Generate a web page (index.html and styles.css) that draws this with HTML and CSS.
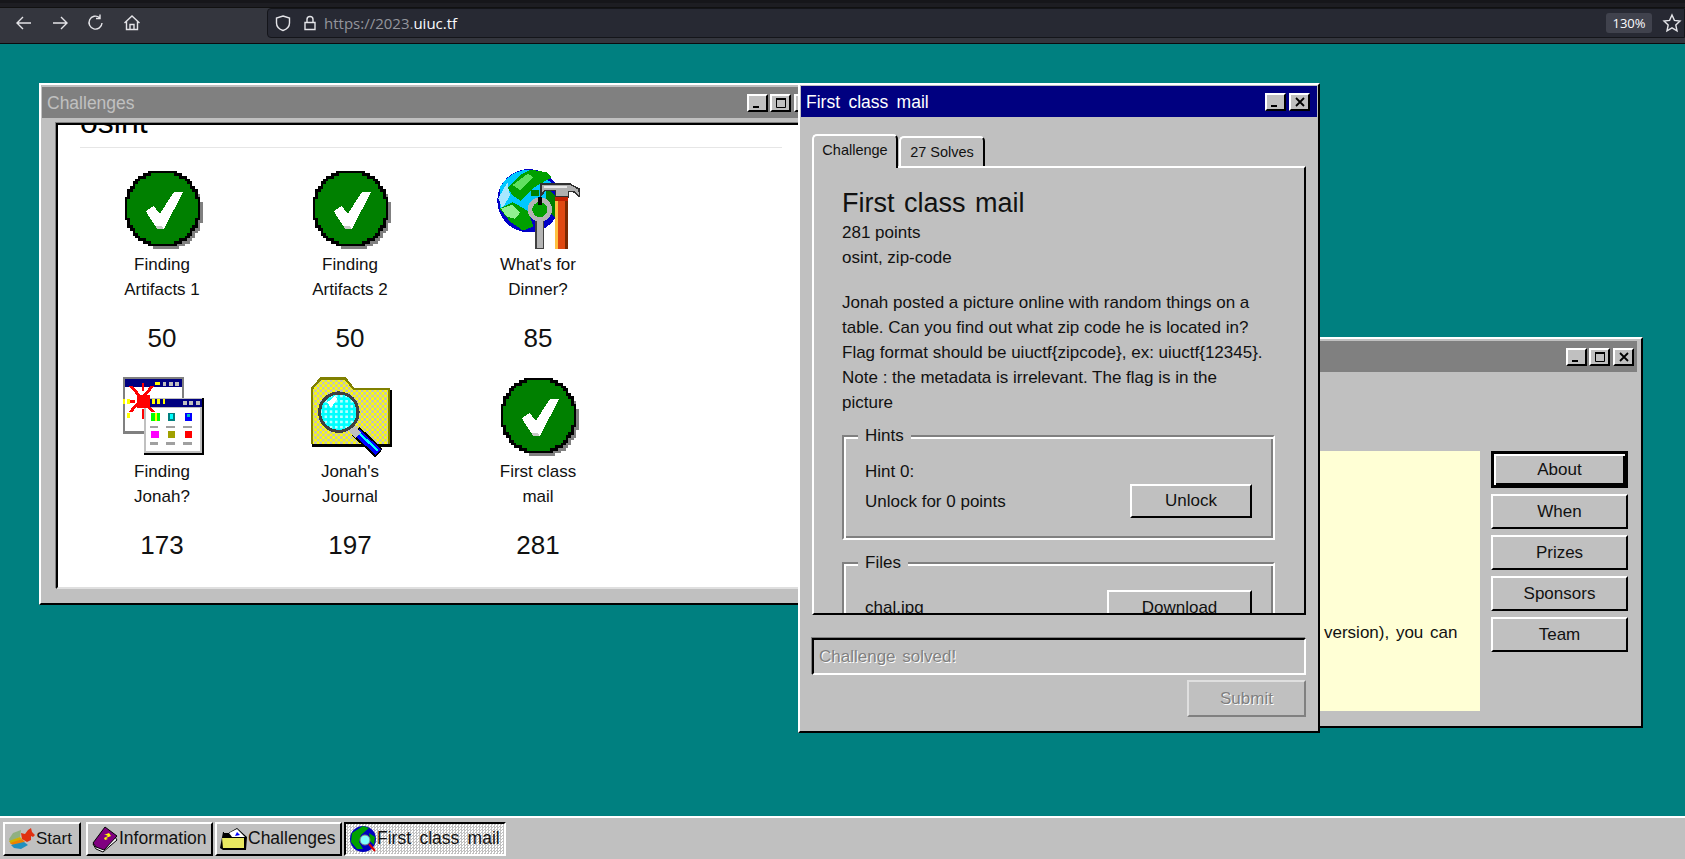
FILE: index.html
```html
<!DOCTYPE html>
<html lang="en">
<head>
    <meta charset="UTF-8">
    <title>UIUCTF 2023</title>
    <link rel="stylesheet" href="styles.css">
</head>
<body>
    <svg class="defs" width="0" height="0">
        <defs>
            <pattern id="dither-yellow" width="2" height="2" patternUnits="userSpaceOnUse" patternContentUnits="userSpaceOnUse">
                <rect width="2" height="2" fill="#ffff00"/>
                <rect width="1" height="1" fill="#c0c0c0"/>
                <rect x="1" y="1" width="1" height="1" fill="#c0c0c0"/>
            </pattern>
            <pattern id="dither-cyan" width="2" height="2" patternUnits="userSpaceOnUse">
                <rect width="2" height="2" fill="#00ffff"/>
                <rect width="1" height="1" fill="#b8ffff"/>
            </pattern>
            <symbol id="ic-check" viewBox="0 0 32 32">
                <path transform="translate(1.5 1.5)" fill="#808080" d="M11 2H21V3H23V4H25V5H26V6H27V8H28V9H29V12H30V20H29V23H28V24H27V26H26V27H25V28H23V29H21V30H11V29H9V28H7V27H6V26H5V24H4V23H3V20H2V12H3V9H4V8H5V6H6V5H7V4H9V3H11Z"/>
                <path fill="#008000" stroke="#000" stroke-width="1" d="M11 2H21V3H23V4H25V5H26V6H27V8H28V9H29V12H30V20H29V23H28V24H27V26H26V27H25V28H23V29H21V30H11V29H9V28H7V27H6V26H5V24H4V23H3V20H2V12H3V9H4V8H5V6H6V5H7V4H9V3H11Z"/>
                <path fill="#fff" d="M9.5 17L12.5 15L15 18L20.5 9.5H24L16.5 24H14Z"/>
                <path fill="#c8c8c8" d="M14 24L13.2 22.7L15.6 22.7L16.5 24Z"/>
            </symbol>
            <symbol id="ic-earth" viewBox="0 0 32 32">
                <circle cx="12.3" cy="13" r="12.2" fill="#0000c8"/>
                <path fill="#00c8ff" d="M1 8C3 4 8 1 12 1L21 6L19 16L8 20L1 16Z"/>
                <path fill="#a8e8ff" d="M.5 12L4 6L5 11L2 16Z"/>
                <path fill="#00a000" d="M4 8L9 3L13 1L19 2L21 4L14 8L9 13L6 11Z"/>
                <path fill="#60e060" d="M6 7L12 2.5L14 4L9 9Z"/>
                <path fill="#00a000" d="M1 16L6 13.5L12 17L14 23L10 24.5L5 21Z"/>
                <path fill="#90f090" d="M1.5 16L6 14.5L9 17.5L7 20L3.5 19Z"/>
                <path fill="#008000" d="M19 8L23.5 12L23 20L19 16Z"/>
                <path fill="#008000" d="M13 9H16V11H13Z"/>
                <circle cx="16.5" cy="16.4" r="3" fill="#00a000"/>
                <path fill="#b0b0b0" stroke="#303030" stroke-width=".6" d="M17 6.5H28L31.6 8.5L32 11.5L29.5 9.5H27.5V11.5H22.5V9H18.5L17 11Z"/>
                <path fill="#e8e8e8" d="M18 7.2H27V8H18Z"/>
                <rect x="22.5" y="11.5" width="4.8" height="20" fill="#e04810"/>
                <rect x="22.5" y="11.5" width="4.8" height="1.5" fill="#c02000"/>
                <rect x="22.5" y="13" width="1" height="18.5" fill="#ffc040"/>
                <rect x="26.2" y="13" width="1.1" height="18.5" fill="#7a2800"/>
                <path fill="#b4b4b4" stroke="#404040" stroke-width=".6" d="M15 20H18V31.5H15Z"/>
                <circle cx="16.5" cy="16.4" r="3.8" fill="none" stroke="#b4b4b4" stroke-width="1.8"/>
                <rect x="15.8" y="11.5" width="1.4" height="3" fill="#000"/>
            </symbol>
            <symbol id="ic-windows" viewBox="0 0 32 32">
                <rect x=".7" y="1.3" width="23.5" height="21.7" fill="#808080"/>
                <rect x="1.6" y="2" width="22" height="20" fill="#fff"/>
                <rect x="1.6" y="2" width="22" height="3" fill="#000080"/>
                <rect x="16" y="3" width="1.5" height="1.5" fill="#c0c0c0"/>
                <rect x="18.4" y="3" width="1.5" height="1.5" fill="#c0c0c0"/>
                <rect x="20.8" y="3" width="1.5" height="1.5" fill="#c0c0c0"/>
                <rect x="8.8" y="9.4" width="23.4" height="21.7" fill="#000"/>
                <rect x="8.8" y="9.4" width="22.6" height="21" fill="#c0c0c0"/>
                <rect x="9.8" y="13" width="20.8" height="16.8" fill="#fff"/>
                <rect x="8.8" y="9.6" width="22.6" height="3" fill="#000080"/>
                <rect x="24" y="10.4" width="1.5" height="1.5" fill="#c0c0c0"/>
                <rect x="26.4" y="10.4" width="1.5" height="1.5" fill="#c0c0c0"/>
                <rect x="28.8" y="10.4" width="1.5" height="1.5" fill="#c0c0c0"/>
                <g fill="#ff0000">
                    <rect x="6" y="8" width="5" height="5"/>
                    <path d="M3 4.5H4.5L13 14.5H11.5ZM13 4.5H11.5L3 14.5H4.5Z"/>
                    <rect x="2.5" y="10" width="3" height="1"/>
                    <rect x="8" y="3.5" width="1" height="3"/>
                    <rect x="8" y="13.5" width="1" height="4"/>
                </g>
                <g fill="#ffff00">
                    <rect x=".6" y="9.8" width="1" height="1.6"/>
                    <rect x="2.4" y="9.8" width="1" height="1.6"/>
                    <rect x="12" y="9.8" width="1" height="1.6"/>
                    <rect x="14" y="9.8" width="1" height="1.6"/>
                    <rect x="16" y="9.8" width="1" height="1.6"/>
                    <rect x="13" y="3" width="2" height="1.4"/>
                    <rect x="2.5" y="15" width="1" height="2"/>
                </g>
                <rect x="11.5" y="15" width="3.5" height="3.2" fill="#00ff00"/>
                <rect x="13" y="15" width="1" height="3.2" fill="#ffff00"/>
                <rect x="18" y="15" width="3" height="3.2" fill="#008080"/>
                <rect x="19" y="15.5" width="1" height="2" fill="#00ffff"/>
                <rect x="24.5" y="15" width="3" height="3.2" fill="#0000ff"/>
                <rect x="25.5" y="15.5" width="1" height="1" fill="#00c0c0"/>
                <rect x="11.5" y="21.8" width="3.3" height="3" fill="#ff00ff"/>
                <rect x="18" y="21.8" width="3" height="3" fill="#a0a000"/>
                <rect x="24.5" y="21.8" width="3" height="3" fill="#ff0000"/>
                <g fill="#a0a0a0">
                    <rect x="11" y="20" width="3.4" height="1"/>
                    <rect x="17.5" y="20" width="3.4" height="1"/>
                    <rect x="24" y="20" width="3.4" height="1"/>
                    <rect x="11" y="26.4" width="3.4" height="1"/>
                    <rect x="17.5" y="26.4" width="3.4" height="1"/>
                    <rect x="24" y="26.4" width="3.4" height="1"/>
                </g>
            </symbol>
            <symbol id="ic-search" viewBox="0 0 32 32">
                <path fill="#000" d="M1 28V6L4.5 1.8H14.5L18 6H32V28Z"/>
                <path fill="#808000" d="M.6 27V5.6L4.3 1.3H14.2L17.4 5.3H31.2V27Z"/>
                <path fill="url(#dither-yellow)" d="M1.4 27V6L4.8 2.2H13.8L17 6.2H30.6V27Z"/>
                <path fill="none" stroke="#000" stroke-width="4.4" d="M18 22L27 30.5"/>
                <path fill="none" stroke="#0000ff" stroke-width="3" d="M18.4 22.4L26.8 30.2"/>
                <path fill="none" stroke="#00ffff" stroke-width=".9" d="M19.5 23L26.6 29.6"/>
                <path fill="none" stroke="#c0c0c0" stroke-width="3" d="M16 20.5L19 23.5"/>
                <circle cx="11.5" cy="14.7" r="7.4" fill="url(#dither-cyan)" stroke="#404040" stroke-width="1.2"/>
                <path fill="#fff" d="M7 11L10 8.5L11 9.5L8.5 13Z"/>
            </symbol>
            <symbol id="ic-min" viewBox="0 0 14 12"><rect x="2" y="9" width="6" height="2" fill="#000"/></symbol>
            <symbol id="ic-max" viewBox="0 0 14 12"><path fill="none" stroke="#000" stroke-width="1" d="M2.5 1.5H11.5V10.5H2.5Z"/><rect x="2" y="1" width="10" height="2" fill="#000"/></symbol>
            <symbol id="ic-close" viewBox="0 0 14 12"><path fill="none" stroke="#000" stroke-width="1.8" d="M3 2L11 10M11 2L3 10"/></symbol>
        </defs>
    </svg>

    <header class="browser">
        <div class="tabstrip"></div>
        <div class="toolbar">
            <nav class="nav-icons">
                <svg width="20" height="20" viewBox="0 0 20 20"><path d="M17 10H3M9 4L3 10L9 16"/></svg>
                <svg width="20" height="20" viewBox="0 0 20 20"><path d="M3 10H17M11 4L17 10L11 16"/></svg>
                <svg width="20" height="20" viewBox="0 0 20 20"><path d="M16 10A6.5 6.5 0 1 1 13.5 4.5M14 1.5V5.5H10"/></svg>
                <svg width="20" height="20" viewBox="0 0 20 20"><path d="M2.5 10L10 3L17.5 10M4.5 8.5V16.5H15.5V8.5M8 16.5V11.5H12V16.5"/></svg>
            </nav>
            <div class="urlbar">
                <svg width="18" height="20" viewBox="0 0 18 20"><path d="M9 3L15.5 5V10C15.5 14 12 16.5 9 17.5C6 16.5 2.5 14 2.5 10V5Z"/></svg>
                <svg width="18" height="20" viewBox="0 0 18 20"><path d="M4 9.5H14V16.5H4ZM6 9.5V6.5A3 3 0 0 1 12 6.5V9.5"/></svg>
                <span class="url"><span class="url-dim">https://2023.</span>uiuc.tf</span>
                <span class="zoom-badge">130%</span>
                <svg class="star" width="20" height="20" viewBox="0 0 20 20"><path d="M10 2L12.4 7.4L18 8L13.8 12L15 17.8L10 14.8L5 17.8L6.2 12L2 8L7.6 7.4Z"/></svg>
            </div>
        </div>
    </header>

    <main class="desktop">
        <section class="window win-info">
            <div class="titlebar inactive">
                <span class="title"></span>
                <div class="controls">
                    <button class="ctl"><svg width="14" height="12"><use href="#ic-min"/></svg></button>
                    <button class="ctl"><svg width="14" height="12"><use href="#ic-max"/></svg></button>
                    <button class="ctl ctl-close"><svg width="14" height="12"><use href="#ic-close"/></svg></button>
                </div>
            </div>
            <div class="info-body">
                <div class="note">
                    <p>version), you can</p>
                </div>
                <div class="side-menu">
                    <button class="btn btn-default">About</button>
                    <button class="btn">When</button>
                    <button class="btn">Prizes</button>
                    <button class="btn">Sponsors</button>
                    <button class="btn">Team</button>
                </div>
            </div>
        </section>

        <section class="window win-challenges">
            <div class="titlebar inactive">
                <span class="title">Challenges</span>
                <div class="controls">
                    <button class="ctl"><svg width="14" height="12"><use href="#ic-min"/></svg></button>
                    <button class="ctl"><svg width="14" height="12"><use href="#ic-max"/></svg></button>
                    <button class="ctl ctl-close"><svg width="14" height="12"><use href="#ic-close"/></svg></button>
                </div>
            </div>
            <div class="chal-frame">
                <h2 class="cat-name">osint</h2>
                <div class="chal-grid">
                    <div class="chal">
                        <svg class="chal-icon"><use href="#ic-check"/></svg>
                        <div class="chal-name">Finding<br>Artifacts 1</div>
                        <div class="chal-points">50</div>
                    </div>
                    <div class="chal">
                        <svg class="chal-icon"><use href="#ic-check"/></svg>
                        <div class="chal-name">Finding<br>Artifacts 2</div>
                        <div class="chal-points">50</div>
                    </div>
                    <div class="chal">
                        <svg class="chal-icon"><use href="#ic-earth"/></svg>
                        <div class="chal-name">What's for<br>Dinner?</div>
                        <div class="chal-points">85</div>
                    </div>
                    <div class="chal">
                        <svg class="chal-icon"><use href="#ic-windows"/></svg>
                        <div class="chal-name">Finding<br>Jonah?</div>
                        <div class="chal-points">173</div>
                    </div>
                    <div class="chal">
                        <svg class="chal-icon"><use href="#ic-search"/></svg>
                        <div class="chal-name">Jonah's<br>Journal</div>
                        <div class="chal-points">197</div>
                    </div>
                    <div class="chal">
                        <svg class="chal-icon"><use href="#ic-check"/></svg>
                        <div class="chal-name">First class<br>mail</div>
                        <div class="chal-points">281</div>
                    </div>
                </div>
            </div>
        </section>

        <section class="window win-mail">
            <div class="titlebar">
                <span class="title">First class mail</span>
                <div class="controls">
                    <button class="ctl"><svg width="14" height="12"><use href="#ic-min"/></svg></button>
                    <button class="ctl ctl-close"><svg width="14" height="12"><use href="#ic-close"/></svg></button>
                </div>
            </div>
            <div class="mail-body">
                <div class="tabs">
                    <div class="tab tab-active">Challenge</div>
                    <div class="tab">27 Solves</div>
                </div>
                <div class="panel">
                    <h1 class="mail-title">First class mail</h1>
                    <p class="meta">281 points<br>osint, zip-code</p>
                    <p class="desc">Jonah posted a picture online with random things on a table. Can you find out what zip code he is located in? Flag format should be uiuctf{zipcode}, ex: uiuctf{12345}. Note : the metadata is irrelevant. The flag is in the picture</p>
                    <fieldset class="group">
                        <legend>Hints</legend>
                        <div class="group-line">Hint 0:</div>
                        <div class="group-row">
                            <span>Unlock for 0 points</span>
                            <button class="btn btn-unlock">Unlock</button>
                        </div>
                    </fieldset>
                    <fieldset class="group">
                        <legend>Files</legend>
                        <div class="group-row group-row-file">
                            <span>chal.jpg</span>
                            <button class="btn btn-download">Download</button>
                        </div>
                    </fieldset>
                </div>
                <input class="flag-input" type="text" value="Challenge solved!" disabled>
                <div class="submit-row">
                    <button class="btn-submit" disabled>Submit</button>
                </div>
            </div>
        </section>
    </main>

    <footer class="taskbar">
        <button class="task task-start">
            <svg width="28" height="24" viewBox="0 0 28 24">
                <path fill="#90b080" d="M1 12L5 6L13 3L12 10L2 15Z"/>
                <path fill="#d0b000" d="M1 14L12 10L14 12L3 17Z"/>
                <path fill="#f08000" d="M2 16L14 12L17 15L6 19Z"/>
                <path fill="#2090c0" d="M3 18L16 15L20 18L13 22L6 21Z"/>
                <path fill="#e03010" d="M13 6L17 7L20 3L23 1L24 5L27 8L25 10L23 9L23 13L19 15L14 12Z"/>
            </svg>
            Start
        </button>
        <button class="task task-info">
            <svg width="28" height="28" viewBox="0 0 28 28">
                <path fill="#fff" stroke="#000" d="M2 19L5 24L12 27L26 15L24 12Z"/>
                <path fill="#800080" stroke="#000" d="M2 18L14 2L26 11L13 25L5 22Z"/>
                <path fill="#ffff00" d="M13 10L18 8L20 11L15 13L17 14L14 15L13 13L17 11L15 10Z"/>
            </svg>
            Information
        </button>
        <button class="task task-chal">
            <svg width="28" height="24" viewBox="0 0 28 24">
                <path fill="#000" d="M0 21L3 5H10L17 1L27 10L26 23H3Z"/>
                <path fill="#fff" d="M9 6L17 2L25 10L12 10Z"/>
                <path fill="#0000ff" d="M17 5L20 8L15 9Z"/>
                <path fill="#e8e860" d="M2 11H24V21H3Z"/>
                <path fill="#c0c0c0" d="M4 3H9V6H4Z"/>
            </svg>
            Challenges
        </button>
        <button class="task task-active">
            <svg width="28" height="28" viewBox="0 0 28 28">
                <circle cx="14" cy="14" r="13" fill="#0000c0"/>
                <path fill="#00a000" d="M3 8L14 1L20 3L12 10L10 17L14 24L8 24L2 17Z"/>
                <path fill="#00a000" d="M20 8L26 12L25 20L21 16Z"/>
                <circle cx="16" cy="15" r="5" fill="#80ffff" stroke="#808080"/>
                <path stroke="#e00000" stroke-width="2" d="M20 19L26 26"/>
            </svg>
            First class mail
        </button>
    </footer>
</body>
</html>
```

FILE: styles.css
```css
* {
    box-sizing: border-box;
}
html, body {
    height: 100%;
}
body {
    margin: 0;
    display: flex;
    flex-direction: column;
    overflow: hidden;
    font-family: "Liberation Sans", Arial, sans-serif;
    font-size: 17px;
    line-height: 25px;
    color: #111;
    background-color: #008080;
}
button, input {
    font-family: inherit;
    font-size: inherit;
    color: inherit;
}
.defs {
    position: absolute;
}

/* browser chrome */
.browser {
    height: 44px;
    flex: none;
    background-color: #34363e;
    border-bottom: 1px solid #0b0b0e;
}
.tabstrip {
    height: 8px;
    background-color: #1d1d22;
    border-bottom: 1px solid #111;
    box-shadow: inset 0 3px 0 #16161a;
}
.toolbar {
    display: flex;
    align-items: center;
    height: 30px;
}
.toolbar svg {
    fill: none;
    stroke: #e4e4e8;
    stroke-width: 1.4;
    flex: none;
}
.nav-icons {
    display: flex;
    width: 267px;
    padding-left: 14px;
    gap: 16px;
}
.urlbar {
    flex: 1;
    height: 30px;
    display: flex;
    align-items: center;
    padding-left: 6px;
    gap: 9px;
    background-color: #272933;
    border: 1px solid #14151a;
    border-radius: 4px 0 0 4px;
    font-family: "Open Sans", sans-serif;
    font-size: 15px;
    color: #fbfbfe;
}
.url {
    flex: 1;
    margin-left: -4px;
}
.url-dim {
    color: #94959c;
}
.zoom-badge {
    width: 46px;
    height: 20px;
    line-height: 20px;
    text-align: center;
    font-size: 13px;
    background-color: #40424d;
    border-radius: 3px;
    margin-right: 1px;
}
.star {
    margin-right: 2px;
}

/* desktop + windows */
.desktop {
    position: relative;
    flex: 1;
}
.window {
    position: absolute;
    display: flex;
    flex-direction: column;
    padding: 1px;
    background-color: #c0c0c0;
    border: 2px solid;
    border-color: #fff #000 #000 #fff;
}
.win-challenges {
    left: 39px;
    top: 39px;
    width: 785px;
    height: 522px;
}
.win-mail {
    left: 798px;
    top: 39px;
    width: 522px;
    height: 650px;
}
.win-info {
    left: 1200px;
    top: 293px;
    width: 443px;
    height: 391px;
}
.titlebar {
    height: 31px;
    flex: none;
    display: flex;
    align-items: center;
    justify-content: space-between;
    padding: 0 7px 0 5px;
    background-color: #000080;
    color: #fff;
    font-size: 17.5px;
    word-spacing: 3.5px;
}
.title {
    padding-top: 1px;
}
.titlebar.inactive {
    background-color: #808080;
    color: #c0c0c0;
    margin: 1px 3px 0 0;
    padding-right: 3px;
}
.controls {
    display: flex;
    gap: 2px;
}
.ctl {
    width: 21px;
    height: 18px;
    padding: 0;
    display: flex;
    align-items: center;
    justify-content: center;
    background-color: #c0c0c0;
    border: 2px solid;
    border-color: #fff #000 #000 #fff;
}
.ctl-close {
    margin-left: 1px;
}
.ctl svg {
    display: block;
}

/* challenges list */
.chal-frame {
    flex: 1;
    margin: 5px 0 13px 14px;
    background-color: #fff;
    border: 2px solid;
    border-color: #000 #fff #dfdfdf #000;
    box-shadow: -1px -1px 0 #808080;
    overflow: hidden;
}
.cat-name {
    margin: -23px 0 0 22px;
    height: 46px;
    line-height: 41px;
    font-size: 32px;
    font-weight: normal;
    color: #000;
    border-bottom: 1px solid #e6e6e6;
    width: 702px;
}
.chal-grid {
    display: grid;
    grid-template-columns: repeat(3, 188px);
    grid-auto-rows: 207px;
    margin: 19px 0 0 10px;
}
.chal {
    display: flex;
    flex-direction: column;
    align-items: center;
    text-align: center;
}
.chal-icon {
    width: 83px;
    height: 83px;
    flex: none;
    shape-rendering: crispEdges;
}
.chal-name {
    height: 50px;
    margin-top: 2px;
}
.chal-points {
    margin-top: 21px;
    font-size: 26px;
    line-height: 30px;
}

/* challenge popup */
.mail-body {
    flex: 1;
    min-height: 0;
    display: flex;
    flex-direction: column;
    padding: 17px 11px 13px 11px;
}
.tabs {
    display: flex;
    align-items: flex-end;
    height: 32px;
    position: relative;
    z-index: 1;
    flex: none;
}
.tab {
    width: 86px;
    height: 30px;
    margin-left: 1px;
    line-height: 28px;
    text-align: center;
    font-size: 14.5px;
    background-color: #c0c0c0;
    border: 2px solid;
    border-color: #fff #000 transparent #fff;
    border-bottom: 0;
    border-radius: 5px 5px 0 0;
}
.tab-active {
    margin: 0 0 -2px 0;
    height: 34px;
}
.panel {
    height: 449px;
    flex: none;
    padding: 19px 29px 0 28px;
    border: 2px solid;
    border-color: #fff #000 #000 #fff;
    overflow: hidden;
}
.mail-title {
    margin: 0;
    font-size: 27px;
    line-height: 32px;
    font-weight: normal;
    word-spacing: 2px;
}
.meta {
    margin: 1px 0 0;
}
.desc {
    margin: 20px 0 0;
    max-width: 425px;
}
.group {
    margin: 9px 0 0;
    padding: 12px 21px 20px 21px;
    min-width: 0;
    border: 2px solid;
    border-color: #808080 #fff #fff #808080;
    box-shadow: inset 2px 2px 0 #fff, inset -2px -2px 0 #808080;
}
.group + .group {
    margin-top: 11px;
    padding-top: 16px;
}
.group legend {
    margin-left: -7px;
    padding: 0 7px;
    height: 23px;
    line-height: 23px;
    background-color: #c0c0c0;
}
.group-line {
    height: 25px;
}
.group-row {
    display: flex;
    align-items: center;
    justify-content: space-between;
}
.group-row-file {
    height: 35px;
}
.btn {
    padding: 0;
    background-color: #c0c0c0;
    border: 2px solid;
    border-color: #fff #000 #000 #fff;
}
.btn-unlock {
    width: 122px;
    height: 34px;
}
.btn-download {
    width: 145px;
    height: 35px;
}
.flag-input {
    flex: none;
    height: 37px;
    margin-top: 23px;
    padding: 0 5px;
    background-color: #c0c0c0;
    border: 2px solid;
    border-color: #000 #fff #fff #000;
    box-shadow: -1px -1px 0 #808080;
    color: #808080;
    text-shadow: 1px 1px 0 #fff;
    word-spacing: 2px;
}
.submit-row {
    display: flex;
    justify-content: flex-end;
    margin-top: 5px;
}
.btn-submit {
    width: 119px;
    height: 37px;
    padding: 0;
    background-color: #c0c0c0;
    border: 2px solid;
    border-color: #dfdfdf #808080 #808080 #dfdfdf;
    color: #808080;
    text-shadow: 1px 1px 0 #fff;
}

/* information window */
.info-body {
    flex: 1;
    min-height: 0;
    display: flex;
    gap: 11px;
    padding: 79px 12px 14px 10px;
}
.note {
    flex: 1;
    display: flex;
    align-items: flex-end;
    padding: 0 0 66px 111px;
    background-color: #ffffd5;
}
.note p {
    margin: 0;
    white-space: nowrap;
    word-spacing: 2px;
}
.side-menu {
    width: 137px;
    flex: none;
    display: flex;
    flex-direction: column;
    gap: 6px;
}
.side-menu .btn {
    height: 35px;
}
.side-menu .btn-default {
    height: 37px;
    border: 3px solid #000;
    box-shadow: inset 2px 2px 0 #fff, inset -2px -2px 0 #000;
}

/* taskbar */
.taskbar {
    flex: none;
    height: 43px;
    display: flex;
    align-items: center;
    padding: 0 0 0 3px;
    gap: 2px;
    background-color: #c0c0c0;
    border-top: 2px solid #fff;
}
.task {
    height: 34px;
    padding: 0 0 0 3px;
    display: flex;
    align-items: center;
    font-size: 17.5px;
    background-color: #c0c0c0;
    border: 2px solid;
    border-color: #fff #000 #000 #fff;
    white-space: nowrap;
}
.task svg {
    flex: none;
}
.task-start {
    width: 78px;
    margin-right: 3px;
    font-size: 17px;
}
.task-info,
.task-chal {
    width: 127px;
}
.task-active {
    width: 162px;
    word-spacing: 3.5px;
    border-color: #000 #fff #fff #000;
    background-color: #fff;
    background-image: repeating-conic-gradient(#c0c0c0 0% 25%, #fff 0% 50%);
    background-size: 3px 3px;
}
```
